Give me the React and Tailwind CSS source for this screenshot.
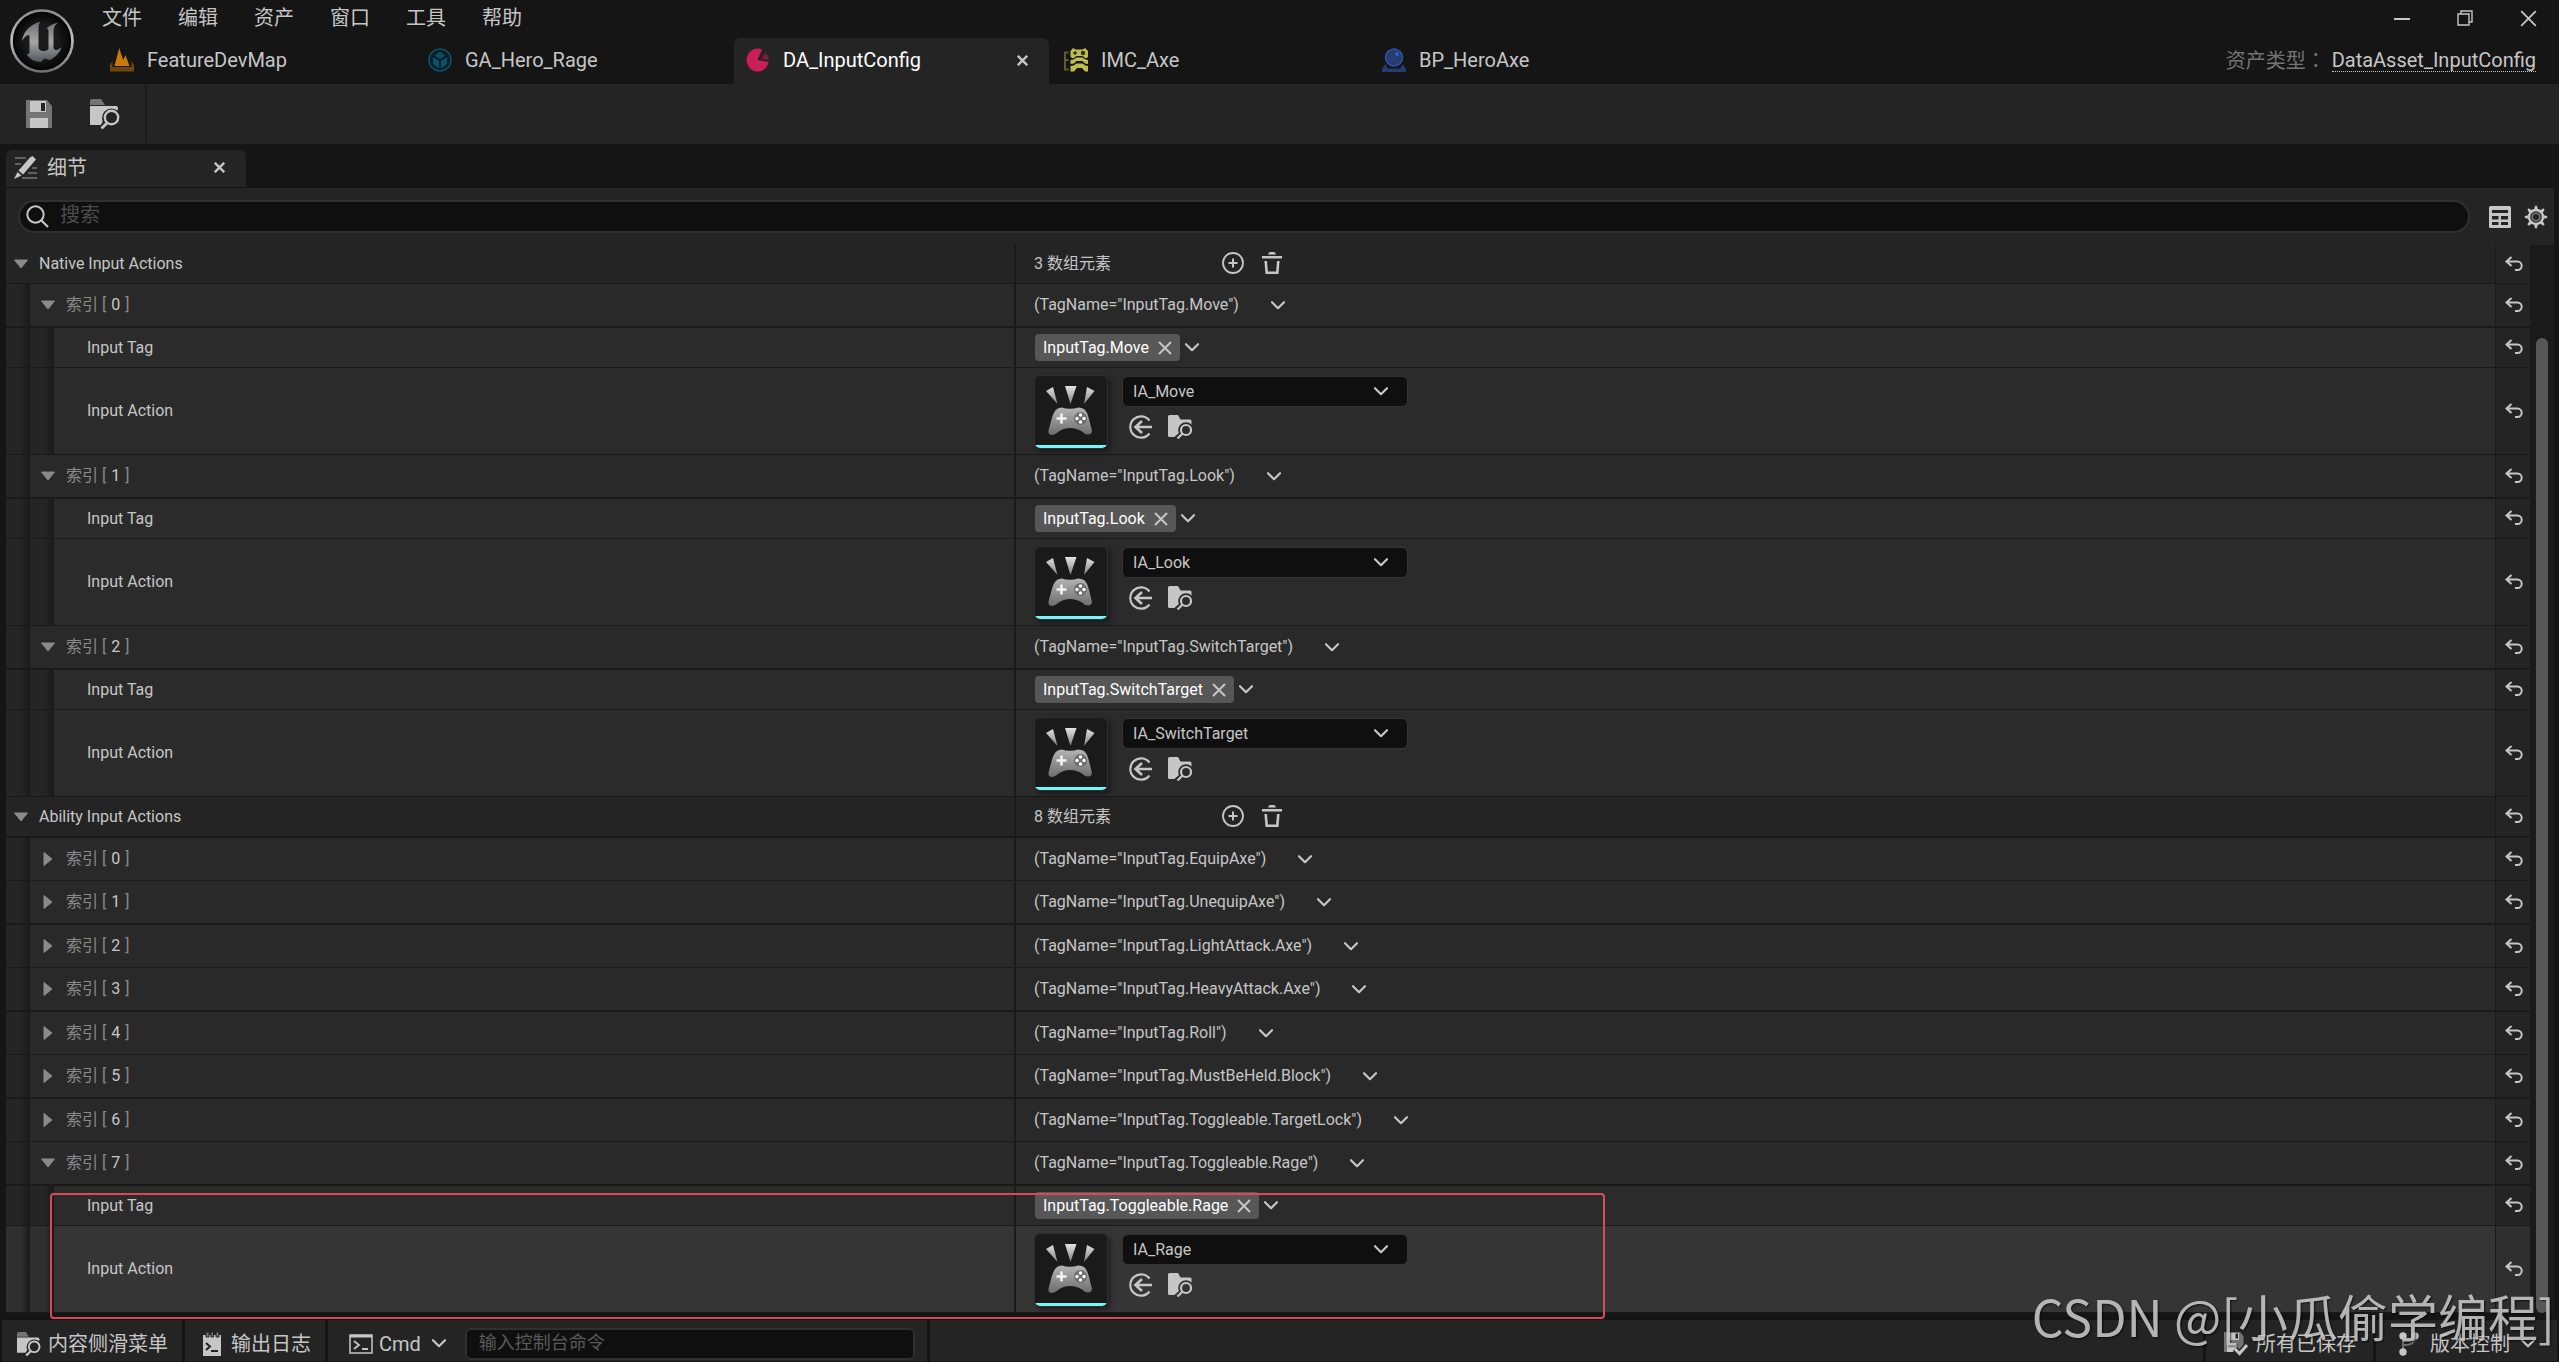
import React from "react";

const nativeActions = [
  { tag: "InputTag.Move", action: "IA_Move" },
  { tag: "InputTag.Look", action: "IA_Look" },
  { tag: "InputTag.SwitchTarget", action: "IA_SwitchTarget" },
];

const abilityActions = [
  { tag: "InputTag.EquipAxe" },
  { tag: "InputTag.UnequipAxe" },
  { tag: "InputTag.LightAttack.Axe" },
  { tag: "InputTag.HeavyAttack.Axe" },
  { tag: "InputTag.Roll" },
  { tag: "InputTag.MustBeHeld.Block" },
  { tag: "InputTag.Toggleable.TargetLock" },
];

/* ---------- icons ---------- */

function UnrealLogo() {
  return (
    <svg viewBox="0 0 64 64" className="size-16" aria-hidden="true">
      <defs>
        <linearGradient id="ring" x1="0" y1="0" x2="0" y2="1">
          <stop offset="0" stopColor="#8a8a8a" />
          <stop offset="0.45" stopColor="#c4c4c4" />
          <stop offset="1" stopColor="#6f7273" />
        </linearGradient>
        <linearGradient id="u" x1="0" y1="0" x2="0" y2="1">
          <stop offset="0" stopColor="#6d7072" />
          <stop offset="0.5" stopColor="#a3a6a8" />
          <stop offset="1" stopColor="#50565a" />
        </linearGradient>
        <radialGradient id="disc">
          <stop offset="0.55" stopColor="#1a1a1a" />
          <stop offset="1" stopColor="#020202" />
        </radialGradient>
      </defs>
      <circle cx="32" cy="32" r="30.5" fill="url(#disc)" stroke="url(#ring)" strokeWidth="2.6" />
      <path
        d="M29 13C20 16 13 23 12 32c2-3 4-5.500 6-6 1.300-.2 1.500 1 1.500 2.500V43c0 2-1.500 2.500-3 2 3 5 8 8 14.500 8l3.500-3.500 5 1.500c6-2.500 10-7 12-13-2.500 2.500-4.500 3.500-6 3-1.500-.5-2-1.500-2-3V22c0-4 2-6.500 5-8.500-5 1-9 3-12 6 1.200.3 2 1 2 2.500v18c-1.500 1.500-3 2.200-5 2-3 0-5-1.500-5-4V20c0-3.500.5-5.500 1.500-7z"
        fill="url(#u)"
      />
    </svg>
  );
}

function MapIcon() {
  return (
    <svg viewBox="0 0 24 24" className="size-6" aria-hidden="true">
      <path d="M0 23.500v-6.500l2.500-4v6h19v-6l2.500 4v6.500z" fill="#6e4708" />
      <path d="M4.500 18 9.200 0l4 12L15.500 7l4 11z" fill="#c87a06" />
    </svg>
  );
}

function AbilityIcon() {
  return (
    <svg viewBox="0 0 24 24" className="size-6" aria-hidden="true">
      <circle cx="12" cy="12" r="11" fill="#0b1f27" stroke="#0a5068" strokeWidth="1.600" />
      <path d="m12 4 5.500 3.500L12 11 6.500 7.500z" fill="#0a5068" />
      <path d="M5 9l6 4v7.500L5 16zM19 9l-6 4v7.500l6-4.500z" fill="#0a5068" />
    </svg>
  );
}

function DataIcon() {
  return (
    <svg viewBox="0 0 24 24" className="size-6" aria-hidden="true">
      <path d="M16 1.500A11 11.500 0 1 0 22.500 14L11.500 12z" fill="#cb1e58" />
      <path d="M19.500 4.500A11 11 0 0 1 23 11.500l-8-.5z" fill="#7c1c3e" />
    </svg>
  );
}

function MappingIcon() {
  return (
    <svg viewBox="0 0 24 24" className="size-6" aria-hidden="true">
      <path d="M4.500 4.500H1v17h3.500M1 12h3.500" fill="none" stroke="#5c5c2c" strokeWidth="2" />
      <path d="M6.500 3 9 0l2.500 1.500h7L21 0l3 3v6l-2 1.500-3.500-2.500h-6L9 10.500 6.500 9z" fill="#bcbc52" />
      <path d="M9 5h4M11 3v4" stroke="#33331a" strokeWidth="1.300" />
      <circle cx="19" cy="5" r="2.200" fill="#33331a" />
      <path d="m6.500 12 3-.5 3-2h6l3 2 2.500.5v4l-3-.5-2.500-2.500h-6L10 15.500l-3.500.5zM6.500 18l3-.5 3-2h6l3 2 2.500.5v5.500h-3L18 20h-5l-3 3.500H6.500z" fill="#bcbc52" />
    </svg>
  );
}

function BlueprintIcon() {
  return (
    <svg viewBox="0 0 24 24" className="size-6" aria-hidden="true">
      <path d="M0 24v-3l3.500-5 2 4.500h13l2-4.500L24 21v3z" fill="#253d70" />
      <circle cx="12" cy="9.500" r="8.500" fill="#253d70" stroke="#2b55b0" strokeWidth="1.500" />
      <ellipse cx="15" cy="6" rx="1.600" ry="2" fill="#2f67d8" />
    </svg>
  );
}

function SaveIcon() {
  return (
    <svg viewBox="0 0 26 28" className="h-7 w-[26px]" aria-hidden="true">
      <path d="M0 0h21l5 6v22H0z" fill="#747474" />
      <path d="M4 1h16v11H4zM4 18h18v10H4z" fill="#c6c6c6" />
      <path d="M15 3h4v8h-4z" fill="#242424" />
    </svg>
  );
}

function BrowseIcon({ className, hole = "#242424", flap = "#747474" }) {
  return (
    <svg viewBox="0 0 30 30" className={className} aria-hidden="true">
      <path d="M0 2q0-2 2-2h9l4 6H0z" fill={flap} />
      <path d="M0 7h26q2 0 2 2v17H0z" fill="#c6c6c6" />
      <path d="M30 27H10l4-6 16-12z" fill={hole} />
      <circle cx="21.500" cy="19" r="9.500" fill={hole} />
      <circle cx="21.500" cy="18.500" r="6.700" fill="none" stroke="#c6c6c6" strokeWidth="2.400" />
      <path d="m17.500 23.500-6 6" stroke="#c6c6c6" strokeWidth="2.800" />
    </svg>
  );
}

function DetailsIcon() {
  return (
    <svg viewBox="0 0 24 23" className="h-[23px] w-6" aria-hidden="true">
      <path d="M1 2h11M1 8h6M18 12h5M14 17h9M8 22h15" stroke="#747474" strokeWidth="1.600" />
      <path d="m16 1.500 2.500-1.500 3.500 3.500L9 18.500l-4.500-4z" fill="#c6c6c6" />
      <path d="M3.500 16 7.500 19.500 0 23z" fill="#c6c6c6" />
    </svg>
  );
}

function Cross({ className, strokeWidth = 2 }) {
  return (
    <svg viewBox="0 0 14 14" className={className} aria-hidden="true">
      <path d="m1 1 12 12M13 1 1 13" stroke="#c6c6c6" strokeWidth={strokeWidth} fill="none" />
    </svg>
  );
}

function Chevron() {
  return (
    <svg viewBox="0 0 14 9" className="h-[9px] w-3.5" aria-hidden="true">
      <path d="m1 1.200 6 6 6-6" stroke="#c6c6c6" strokeWidth="2.200" fill="none" strokeLinecap="round" strokeLinejoin="round" />
    </svg>
  );
}

function SearchIcon() {
  return (
    <svg viewBox="0 0 23 23" className="size-[23px] shrink-0" aria-hidden="true">
      <circle cx="9.500" cy="9.500" r="8.200" stroke="#c6c6c6" strokeWidth="2" fill="none" />
      <path d="m15.500 15.500 6.500 6.500" stroke="#c6c6c6" strokeWidth="2.200" />
    </svg>
  );
}

function TableIcon() {
  return (
    <svg viewBox="0 0 22 22" className="size-[22px]" aria-hidden="true">
      <rect width="22" height="22" rx="1.500" fill="#c6c6c6" />
      <path d="M3 4h16v3H3zM3 10h6.500v3.500H3zM12 10h7v3.500h-7zM3 16h6.500v3H3zM12 16h7v3h-7z" fill="#242424" />
    </svg>
  );
}

function GearIcon() {
  const teeth = [0, 45, 90, 135, 180, 225, 270, 315];
  return (
    <svg viewBox="0 0 24 24" className="size-6" aria-hidden="true">
      {teeth.map((a) => (
        <path key={a} d="M10 5.500 11 .8h2l1 4.700z" fill="#c6c6c6" transform={`rotate(${a} 12 12)`} />
      ))}
      <circle cx="12" cy="12" r="7" fill="none" stroke="#c6c6c6" strokeWidth="2.400" />
      <circle cx="12" cy="12" r="3.800" fill="none" stroke="#7a7a7a" strokeWidth="1.600" />
    </svg>
  );
}

function UndoIcon() {
  return (
    <svg viewBox="0 0 18 15" className="h-[15px] w-[18px]" aria-hidden="true">
      <path d="M6.500 1 1.500 5.500l5 4.500M2 5.500h10.500a4.200 4.200 0 0 1 0 8.400h-2.500" stroke="#c6c6c6" strokeWidth="2" fill="none" />
    </svg>
  );
}

function PlusCircle() {
  return (
    <svg viewBox="0 0 22 22" className="size-[22px]" aria-hidden="true">
      <circle cx="11" cy="11" r="10" stroke="#c6c6c6" strokeWidth="1.800" fill="none" />
      <path d="M11 6.500v9M6.500 11h9" stroke="#c6c6c6" strokeWidth="2" />
    </svg>
  );
}

function TrashIcon() {
  return (
    <svg viewBox="0 0 22 22" className="size-[22px]" aria-hidden="true">
      <path d="M7 2.500Q7.500 0 9 0h4q1.500 0 2 2.500zM1 4h20v2.500H1z" fill="#c6c6c6" />
      <path d="M4.700 9 5.700 20.800h10.600l1-11.800" stroke="#c6c6c6" strokeWidth="2.600" fill="none" />
    </svg>
  );
}

function UseIcon() {
  return (
    <svg viewBox="0 0 24 24" className="size-6" aria-hidden="true">
      <path d="M20.500 5.500a10.700 10.700 0 1 0 0 13" stroke="#c6c6c6" strokeWidth="2.200" fill="none" />
      <path d="M23 12H7M13 6l-6.500 6 6.500 6" stroke="#c6c6c6" strokeWidth="2.600" fill="none" />
    </svg>
  );
}

function FindIcon({ hole }) {
  return (
    <svg viewBox="0 0 24 24" className="size-6" aria-hidden="true">
      <path d="M0 1.500Q0 0 1.500 0H10l2.500 4.500H22q1.500 0 1.500 1.500v8L10 22H1.500Q0 22 0 20.500z" fill="#c6c6c6" />
      <circle cx="18" cy="15" r="7.800" fill={hole} />
      <path d="M16 17 8 24" stroke={hole} strokeWidth="5" />
      <circle cx="18" cy="15" r="5" stroke="#c6c6c6" strokeWidth="2.200" fill="none" />
      <path d="m14.500 18.500-5 5" stroke="#c6c6c6" strokeWidth="2.200" />
    </svg>
  );
}

function GamepadArt() {
  return (
    <svg viewBox="0 0 72 72" className="size-[72px]" aria-hidden="true">
      <defs>
        <linearGradient id="pad" x1="0" y1="0" x2="0" y2="1">
          <stop offset="0" stopColor="#b4b4b4" />
          <stop offset="1" stopColor="#6c6c6c" />
        </linearGradient>
        <linearGradient id="ray" x1="0" y1="0" x2="0" y2="1">
          <stop offset="0" stopColor="#e4e4e4" />
          <stop offset="1" stopColor="#808080" />
        </linearGradient>
      </defs>
      <path d="m11 15 7-4 4.500 17zM30 10h11.500L35.500 28zM52 11l7.500 4L49 28z" fill="url(#ray)" />
      <path
        d="M22 33q2-1.500 5-1.500 3 1.300 8 1.300t8-1.300q4 0 6 1.500 3 2 5 10l2.800 11q.6 4-3.300 4.500-3.500.3-6.500-3-5.500-3.500-12-3.500t-12 4q-3 3.300-6.500 3-3.500-.5-3-4.500l3-11q2-8 5.500-10.500z"
        fill="url(#pad)"
      />
      <path d="M26.500 37.500v10M21.500 42.500h10" stroke="#f2f2f2" strokeWidth="2.600" />
      <circle cx="45.500" cy="42.500" r="6.500" fill="#6e6e6e" />
      <g fill="#fff">
        <circle cx="45.500" cy="39" r="1.700" />
        <circle cx="45.500" cy="46" r="1.700" />
        <circle cx="42" cy="42.500" r="1.700" />
        <circle cx="49" cy="42.500" r="1.700" />
      </g>
    </svg>
  );
}

function LogIcon() {
  return (
    <svg viewBox="0 0 18 24" className="h-6 w-[18px]" aria-hidden="true">
      <path d="M0 3h18v21H0z" fill="#c6c6c6" />
      <path d="M3 0h3v5H3zM8 0h2.500v5H8zM13 0h3v5h-3z" fill="#747474" stroke="#242424" />
      <path d="m3 11 4 3.500L3 18M8 19h7" stroke="#242424" strokeWidth="2" fill="none" />
    </svg>
  );
}

function CmdIcon() {
  return (
    <svg viewBox="0 0 24 20" className="h-5 w-6" aria-hidden="true">
      <path d="M1 1h22v18H1z" stroke="#c6c6c6" strokeWidth="1.500" fill="none" />
      <path d="M1 1h22v2.500H1z" fill="#c6c6c6" />
      <path d="m5 7 5 4-5 4M13 15h6" stroke="#c6c6c6" strokeWidth="1.800" fill="none" />
    </svg>
  );
}

function SavedIcon() {
  return (
    <svg viewBox="0 0 24 24" className="size-6" aria-hidden="true">
      <path d="M0 0h16l3.500 4v10l-6 6H0z" fill="#747474" />
      <path d="M3 1h12v7H3zM3 13h10v7H3z" fill="#c6c6c6" />
      <path d="M11.500 1.500h2.500v5h-2.500z" fill="#242424" />
      <path d="m11 17 4.500 4.500L23 13" stroke="#242424" strokeWidth="6" fill="none" />
      <path d="m11 17 4.500 4.500L23 13" stroke="#c6c6c6" strokeWidth="3" fill="none" />
    </svg>
  );
}

function BranchIcon() {
  return (
    <svg viewBox="0 0 20 24" className="h-6 w-5" aria-hidden="true">
      <path d="M4 4v16M16 5q0 8-11 8" stroke="#747474" strokeWidth="1.800" fill="none" />
      <g fill="#c6c6c6">
        <circle cx="4" cy="4" r="3.700" />
        <circle cx="16" cy="4" r="3.700" />
        <circle cx="4" cy="20" r="3.700" />
      </g>
    </svg>
  );
}

/* ---------- chrome ---------- */

function MenuBar() {
  return (
    <div className="flex items-start justify-between">
      <nav className="flex gap-9 pt-[5px]">
        {["文件", "编辑", "资产", "窗口", "工具", "帮助"].map((m) => (
          <button key={m} type="button" className="text-xl leading-[26px]">
            {m}
          </button>
        ))}
      </nav>
      <div className="flex items-center gap-[47px] pt-[9px] pr-[22px]">
        <button type="button" aria-label="最小化" className="flex h-[18px] items-center pt-0.5">
          <svg viewBox="0 0 16 2" className="h-0.5 w-4" aria-hidden="true">
            <path d="M0 1h16" stroke="#c6c6c6" strokeWidth="2" />
          </svg>
        </button>
        <button type="button" aria-label="还原">
          <svg viewBox="0 0 16 16" className="size-4" aria-hidden="true">
            <path d="M1 4h11v11H1zM4 4V1h11v11h-3" stroke="#c6c6c6" strokeWidth="1.400" fill="none" />
          </svg>
        </button>
        <button type="button" aria-label="关闭">
          <Cross className="size-[17px]" strokeWidth={1.5} />
        </button>
      </div>
    </div>
  );
}

function AssetTab({ icon, name, active }) {
  return (
    <div
      className={
        active
          ? "flex h-[46px] w-[315px] items-center rounded-t-md bg-[#242424] pr-[21px] pb-0.5 pl-3 text-white"
          : "flex h-[46px] w-[315px] items-center pr-[21px] pb-0.5 pl-3"
      }
    >
      <button type="button" className="flex flex-1 items-center gap-[13px] text-xl leading-6">
        {icon}
        {name}
      </button>
      {active && (
        <button type="button" aria-label="关闭标签">
          <Cross className="size-[11px]" strokeWidth={3} />
        </button>
      )}
    </div>
  );
}

function TitleBar() {
  return (
    <header className="flex h-[84px] bg-[#151515]">
      <div className="w-[98px] shrink-0 pt-[9px] pl-2.5">
        <UnrealLogo />
      </div>
      <div className="flex flex-1 flex-col justify-between">
        <div className="pl-1">
          <MenuBar />
        </div>
        <div className="flex items-center justify-between">
          <div className="flex gap-[3px]">
            <AssetTab icon={<MapIcon />} name="FeatureDevMap" />
            <AssetTab icon={<AbilityIcon />} name="GA_Hero_Rage" />
            <AssetTab icon={<DataIcon />} name="DA_InputConfig" active />
            <AssetTab icon={<MappingIcon />} name="IMC_Axe" />
            <AssetTab icon={<BlueprintIcon />} name="BP_HeroAxe" />
          </div>
          <div className="flex items-center gap-1.5 pr-[23px] pb-px text-xl leading-6">
            <span className="text-[#747474]">
              资产类型<span className="font-['Noto_Sans_CJK_TC',sans-serif]">：</span>
            </span>
            <a href="#asset" className="border-b border-dotted border-[#c6c6c6] leading-[22px]">
              DataAsset_InputConfig
            </a>
          </div>
        </div>
      </div>
    </header>
  );
}

function Toolbar() {
  return (
    <div className="flex h-[60px] bg-[#242424]">
      <div className="my-px flex items-center gap-[38px] border-r-2 border-[#1a1a1a] pr-[25px] pl-[26px]">
        <button type="button" aria-label="保存">
          <SaveIcon />
        </button>
        <button type="button" aria-label="浏览">
          <BrowseIcon className="size-[30px]" />
        </button>
      </div>
    </div>
  );
}

/* ---------- property tree ---------- */

function Expander({ open, label }) {
  return (
    <button type="button" aria-expanded={open} aria-label={label} className="flex w-4 shrink-0 items-center justify-center">
      {open ? (
        <svg viewBox="0 0 16 10" className="h-2.5 w-4" aria-hidden="true">
          <path d="M1.500 1h13L8 9z" fill="#8a8a8a" stroke="#8a8a8a" strokeLinejoin="round" />
        </svg>
      ) : (
        <svg viewBox="0 0 10 16" className="h-4 w-2.5" aria-hidden="true">
          <path d="M1 1.500v13L9 8z" fill="#8a8a8a" stroke="#8a8a8a" strokeLinejoin="round" />
        </svg>
      )}
    </button>
  );
}

function Row({ depth = 0, height, hovered, thick, name, children }) {
  const tone = hovered ? "bg-[#353535]" : depth === 0 ? "bg-[#242424]" : depth === 1 ? "bg-[#292929]" : "bg-[#2b2b2b]";
  const line = thick ? "border-b-2" : "border-b";
  const rail = hovered
    ? "w-6 shrink-0 bg-linear-to-r from-[#303030] from-60% to-[#1a1a1a]"
    : "w-6 shrink-0 bg-linear-to-r from-[#252525] from-60% to-[#1a1a1a]";
  return (
    <div className={`grid grid-cols-[minmax(0,1010fr)_minmax(0,1479fr)_35px] border-[#1a1a1a] ${line} ${height} ${tone}`}>
      <div className="flex border-r-2 border-[#1a1a1a]">
        {depth > 0 && <div className={rail} />}
        {depth > 1 && <div className={rail} />}
        <div className="flex items-center">{name}</div>
      </div>
      <div className="flex items-center pl-[18px]">{children}</div>
      <div
        className={`flex items-center justify-center border-l border-[#1a1a1a] pb-0.5 pl-0.5 ${hovered ? "bg-[#2f2f2f]" : "bg-[#242424]"}`}
      >
        <button type="button" aria-label="重置为默认值">
          <UndoIcon />
        </button>
      </div>
    </div>
  );
}

function ArrayRow({ name, count, height, thick }) {
  return (
    <Row
      height={height}
      thick={thick}
      name={
        <div className="flex items-center gap-[10px] pl-[7px]">
          <Expander open label={name} />
          <span>{name}</span>
        </div>
      }
    >
      <span className="w-[188px]">{count} 数组元素</span>
      <div className="flex items-center gap-[17px] pb-0.5">
        <button type="button" aria-label="添加元素">
          <PlusCircle />
        </button>
        <button type="button" aria-label="清空元素">
          <TrashIcon />
        </button>
      </div>
    </Row>
  );
}

function IndexRow({ index, tag, open, height, thick }) {
  return (
    <Row
      depth={1}
      height={height}
      thick={thick}
      name={
        <div className="flex items-center gap-[10px] pl-[10px]">
          <Expander open={open} label={`索引 ${index}`} />
          <span className="flex gap-[5px] text-[#8a8a8a]">
            <span>索引 [</span>
            <span className="text-[#c6c6c6]">{index}</span>
            <span>]</span>
          </span>
        </div>
      }
    >
      <div className="flex items-center gap-8">
        <span>(TagName="{tag}")</span>
        <button type="button" aria-label="展开选项">
          <Chevron />
        </button>
      </div>
    </Row>
  );
}

function TagRow({ tag }) {
  return (
    <Row depth={2} height="h-10" name={<span className="pl-[33px]">Input Tag</span>}>
      <div className="flex items-center gap-[5px] pl-px">
        <div className="flex h-[27px] items-center gap-[9px] rounded bg-[#575757] px-2 text-white">
          {tag}
          <button type="button" aria-label={`移除 ${tag}`}>
            <Cross className="size-3.5" />
          </button>
        </div>
        <button type="button" aria-label="选择标签">
          <Chevron />
        </button>
      </div>
    </Row>
  );
}

function ActionRow({ action, hovered }) {
  return (
    <Row depth={2} height="h-[87px]" hovered={hovered} name={<span className="pl-[33px]">Input Action</span>}>
      <div className="flex gap-[14px] pt-0.5">
        <div className="h-[74px] w-[74px] overflow-hidden rounded-md border border-[#303030] bg-[#1a1a1a] shadow-[3px_3px_5px_rgba(0,0,0,0.4)]">
          <div className="h-[69px] overflow-hidden">
            <GamepadArt />
          </div>
          <div className="h-[3px] bg-[#75f5fa]" />
        </div>
        <div className="flex flex-col gap-2 pt-px">
          <label className="grid items-center rounded-md border border-[#333333] bg-[#0f0f0f]">
            <select
              aria-label="Input Action"
              className="col-start-1 row-start-1 h-[29px] w-[284px] appearance-none bg-transparent pl-[10px] leading-5"
            >
              <option>{action}</option>
            </select>
            <span className="pointer-events-none col-start-1 row-start-1 justify-self-end pr-[19px]">
              <Chevron />
            </span>
          </label>
          <div className="flex gap-[15px] pl-[7px]">
            <button type="button" aria-label="使用选中资产">
              <UseIcon />
            </button>
            <button type="button" aria-label="浏览至资产">
              <FindIcon hole={hovered ? "#353535" : "#2b2b2b"} />
            </button>
          </div>
        </div>
      </div>
    </Row>
  );
}

function DetailsPanel() {
  return (
    <main className="flex min-h-0 flex-1 flex-col bg-[#151515] pt-1.5 pr-[5px] pl-1.5">
      <div className="flex h-[37px] w-[240px] items-center rounded-t-md bg-[#242424] pr-[21px] pb-0.5 pl-2">
        <button type="button" className="flex flex-1 items-center gap-[9px] text-xl leading-6">
          <DetailsIcon />
          细节
        </button>
        <button type="button" aria-label="关闭细节">
          <Cross className="size-[11px]" strokeWidth={3} />
        </button>
      </div>
      <div className="mt-px flex items-center gap-[19px] bg-[#242424] py-3 pr-1.5 pl-3">
        <label className="flex h-[33px] flex-1 items-center gap-[11px] rounded-full border-2 border-[#303030] bg-[#0f0f0f] px-1.5">
          <SearchIcon />
          <input
            type="text"
            aria-label="搜索"
            placeholder="搜索"
            className="flex-1 bg-transparent pb-1 text-xl leading-6 outline-none placeholder:text-[#4c4c4c]"
          />
        </label>
        <div className="flex items-center gap-[13px]">
          <button type="button" aria-label="表格视图">
            <TableIcon />
          </button>
          <button type="button" aria-label="设置">
            <GearIcon />
          </button>
        </div>
      </div>
      <div className="flex">
        <section className="flex-1 text-base leading-5">
          <ArrayRow name="Native Input Actions" count={3} height="h-[39px]" />
          {nativeActions.map((item, i) => (
            <React.Fragment key={item.tag}>
              <IndexRow index={i} tag={item.tag} open height="h-11" thick />
              <TagRow tag={item.tag} />
              <ActionRow action={item.action} />
            </React.Fragment>
          ))}
          <ArrayRow name="Ability Input Actions" count={8} height="h-[41px]" thick />
          {abilityActions.map((item, i) => (
            <IndexRow
              key={item.tag}
              index={i}
              tag={item.tag}
              height={i % 2 ? "h-11" : "h-[43px]"}
              thick={i % 2 === 1}
            />
          ))}
          <IndexRow index={7} tag="InputTag.Toggleable.Rage" open height="h-11" thick />
          <div className="relative">
            <TagRow tag="InputTag.Toggleable.Rage" />
            <ActionRow action="IA_Rage" hovered />
            {/* highlight frame round the Rage entry */}
            <div className="pointer-events-none absolute top-[7px] -bottom-1.5 left-11 w-[61.6%] rounded border-2 border-[#d64a5a]" />
          </div>
        </section>
        <div className="flex w-6 flex-col items-center bg-[#1a1a1a] pt-[93px]">
          <div className="w-3 flex-1 rounded-full bg-[#575757]" />
        </div>
      </div>
    </main>
  );
}

function StatusBar() {
  return (
    <footer className="flex h-[42px] bg-[#151515] pr-0.5 pb-px pl-0.5 text-xl leading-6">
      <div className="flex flex-1 gap-[3px]">
        <button type="button" className="flex items-center gap-[7px] bg-[#242424] pt-1.5 pr-[14px] pl-[15px]">
          <BrowseIcon className="size-6" />
          内容侧滑菜单
        </button>
        <button type="button" className="flex items-center gap-[10px] bg-[#242424] pt-1.5 pr-[14px] pl-[18px]">
          <LogIcon />
          输出日志
        </button>
        <div className="flex items-center gap-[19px] bg-[#242424] pr-3 pl-[21px]">
          <button type="button" className="flex items-center gap-1.5 pt-1.5">
            <CmdIcon />
            Cmd
            <span className="pl-[5px]">
              <Chevron />
            </span>
          </button>
          <input
            type="text"
            aria-label="输入控制台命令"
            placeholder="输入控制台命令"
            className="mt-1.5 h-8 w-[450px] rounded-md border-2 border-[#303030] bg-[#0f0f0f] px-3 pb-0.5 text-lg leading-6 outline-none placeholder:text-[#5a5a5a]"
          />
        </div>
        <div className="flex-1 bg-[#242424]" />
        <button type="button" className="flex items-center gap-[8px] bg-[#242424] pt-1.5 pr-[17px] pl-[18px]">
          <SavedIcon />
          所有已保存
        </button>
        <button type="button" className="flex items-center gap-[11px] bg-[#242424] pt-1.5 pr-[22px] pl-[23px]">
          <BranchIcon />
          版本控制
          <Chevron />
        </button>
      </div>
    </footer>
  );
}

export default function App() {
  return (
    <div className="relative flex h-screen flex-col overflow-hidden bg-[#151515] font-[Roboto,'Noto_Sans_CJK_SC',sans-serif] text-[#c6c6c6]">
      <TitleBar />
      <Toolbar />
      <DetailsPanel />
      <StatusBar />
      <div className="pointer-events-none absolute right-1 bottom-2.5 font-['Noto_Sans_CJK_SC',sans-serif] text-[50px] leading-[74px] text-[#c4c4c4] opacity-90 [text-shadow:1px_1px_2px_rgba(0,0,0,0.7)]">
        CSDN @[小瓜偷学编程]
      </div>
    </div>
  );
}
